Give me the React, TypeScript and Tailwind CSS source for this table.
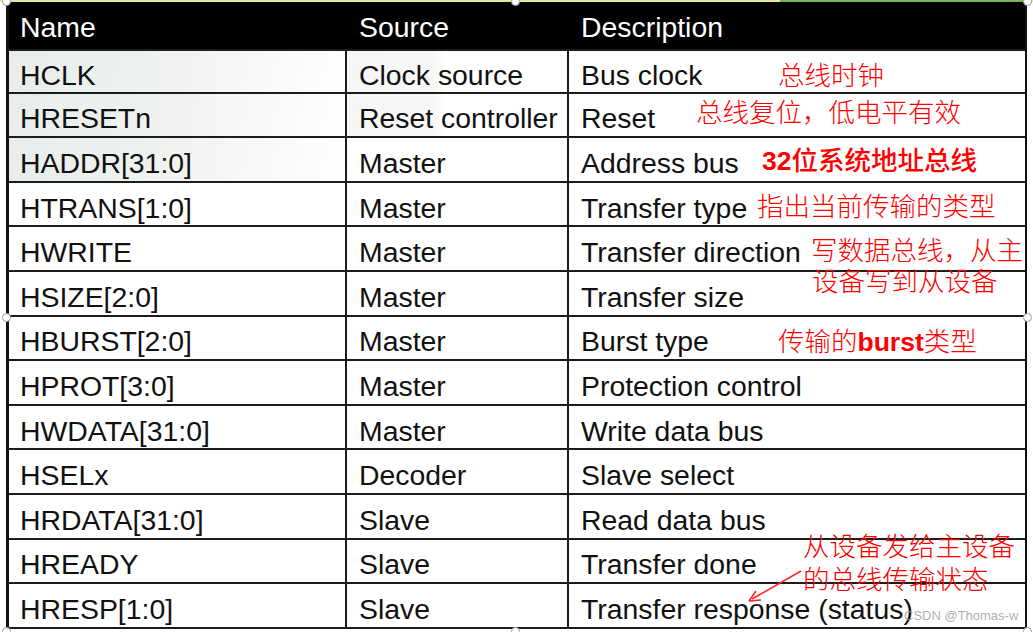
import React from 'react'

const rows = [
  ['HCLK', 'Clock source', 'Bus clock'],
  ['HRESETn', 'Reset controller', 'Reset'],
  ['HADDR[31:0]', 'Master', 'Address bus'],
  ['HTRANS[1:0]', 'Master', 'Transfer type'],
  ['HWRITE', 'Master', 'Transfer direction'],
  ['HSIZE[2:0]', 'Master', 'Transfer size'],
  ['HBURST[2:0]', 'Master', 'Burst type'],
  ['HPROT[3:0]', 'Master', 'Protection control'],
  ['HWDATA[31:0]', 'Master', 'Write data bus'],
  ['HSELx', 'Decoder', 'Slave select'],
  ['HRDATA[31:0]', 'Slave', 'Read data bus'],
  ['HREADY', 'Slave', 'Transfer done'],
  ['HRESP[1:0]', 'Slave', 'Transfer response (status)'],
]

// red notes written over the slide
const notes = [
  { text: '总线时钟', cls: 'left-[778px] top-[58px]' },
  { text: '总线复位，低电平有效', cls: 'left-[696px] top-[95px]' },
  { text: '指出当前传输的类型', cls: 'left-[757px] top-[189px]' },
  { text: '写数据总线，从主', cls: 'left-[811px] top-[233px]' },
  { text: '设备写到从设备', cls: 'left-[812px] top-[264px]' },
  { text: '从设备发给主设备', cls: 'left-[803px] top-[529px]' },
  { text: '的总线传输状态', cls: 'left-[803px] top-[562px]' },
]

function Handle({ cls }: { cls: string }) {
  return <div className={`absolute w-[9px] h-[9px] rounded-full bg-white border border-[#9a9a9a] ${cls}`} />
}

export default function App() {
  return (
    <div className="relative w-[1033px] h-[632px] overflow-hidden bg-white font-['Liberation_Sans',Arial,sans-serif] text-[28.4px] leading-[32px] text-[#111]">
      {/* slide top edge */}
      <div className="flex h-[2px]">
        <div className="w-[780px] bg-[#e3e99c]" />
        <div className="w-[245px] bg-[#78b35a]" />
        <div className="flex-1 bg-[#e3e99c]" />
      </div>

      <div className="ml-[6px] w-[1021px] border-l-[3px] border-r-[2px] border-[#111]">
        {/* header */}
        <div className="grid grid-cols-[338px_222px_1fr] h-[47px] bg-black text-white items-center pt-[3px]">
          <div className="pl-[11px]">Name</div>
          <div className="pl-[12px]">Source</div>
          <div className="pl-[12px]">Description</div>
        </div>

        {rows.map((r, i) => (
          <div
            key={r[0]}
            className={`grid grid-cols-[338px_222px_1fr] h-[44.6px] border-b-2 border-[#1c1c1c] ${i === 0 ? 'border-t-2' : ''}`}
          >
            <div
              className={`flex items-center pt-[7px] pl-[11px] border-r-2 border-[#1c1c1c] ${
                i < 3 ? 'bg-[linear-gradient(100deg,#e8edeb_0%,#eff2ef_45%,#f8f8f8_75%,#ffffff_100%)]' : ''
              }`}
            >
              {r[0]}
            </div>
            <div
              className={`flex items-center pt-[7px] pl-[12px] border-r-2 border-[#1c1c1c] ${
                i < 2 ? 'bg-[linear-gradient(90deg,#f5f6f5_0%,#f7f7f7_40%,#ffffff_45%)]' : ''
              }`}
            >
              {r[1]}
            </div>
            <div className="flex items-center pt-[7px] pl-[12px]">{r[2]}</div>
          </div>
        ))}
      </div>

      {/* annotations */}
      {notes.map(n => (
        <div
          key={n.text}
          className={`absolute ${n.cls} text-[#ff0000] text-[26.5px] leading-[32px] whitespace-nowrap font-['Noto_Sans_CJK_SC',sans-serif] font-light`}
        >
          {n.text}
        </div>
      ))}
      <div className="absolute left-[762px] top-[143px] text-[#ff0000] text-[26.5px] leading-[32px] whitespace-nowrap font-['Noto_Sans_CJK_SC',sans-serif] font-medium">
        <span className="font-['Liberation_Sans',Arial,sans-serif] font-bold">32</span>位系统地址总线
      </div>
      <div className="absolute left-[778px] top-[324px] text-[#ff0000] text-[26.5px] leading-[32px] whitespace-nowrap font-['Noto_Sans_CJK_SC',sans-serif] font-light">
        传输的<span className="font-['Liberation_Sans',Arial,sans-serif] font-bold">burst</span>类型
      </div>

      <svg className="absolute left-0 top-0" width="1033" height="632">
        <line x1="801" y1="571" x2="752" y2="599" stroke="#ff2020" strokeWidth="1.5" />
        <path d="M749 601 L756 591 M749 601 L761 600" stroke="#ff2020" strokeWidth="1.5" fill="none" />
      </svg>

      <div className="absolute left-[904px] top-[608px] text-[13px] leading-[16px] text-[#9a9a9a]/80 font-['Liberation_Sans',Arial,sans-serif] whitespace-nowrap">
        CSDN @Thomas-w
      </div>

      <Handle cls="left-[2px] top-[-3px]" />
      <Handle cls="left-[511px] top-[-3px]" />
      <Handle cls="left-[1023px] top-[-3px]" />
      <Handle cls="left-[2px] top-[313px]" />
      <Handle cls="left-[1023px] top-[313px]" />
      <Handle cls="left-[2px] top-[627px]" />
      <Handle cls="left-[511px] top-[627px]" />
      <Handle cls="left-[1023px] top-[627px]" />
    </div>
  )
}
